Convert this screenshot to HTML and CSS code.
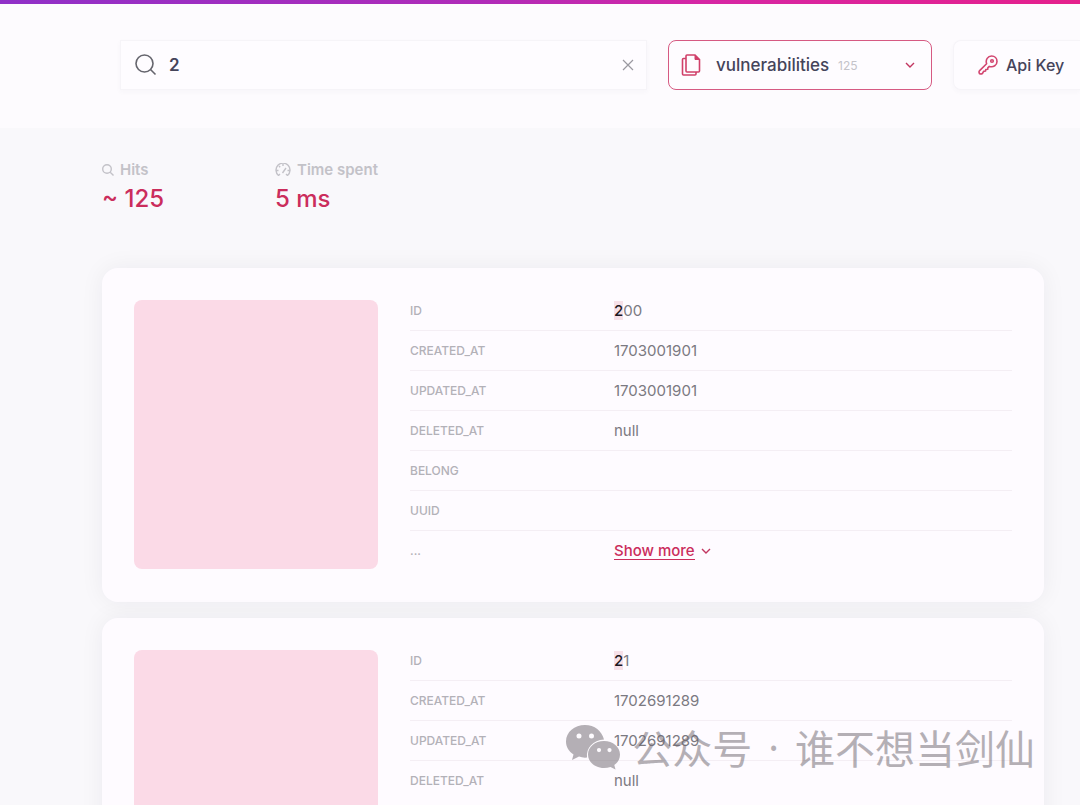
FILE: index.html
```html
<!DOCTYPE html>
<html lang="en">
<head>
<meta charset="utf-8">
<title>vulnerabilities</title>
<link rel="stylesheet" href="styles.css">
</head>
<body>
<header class="topbar">
  <label class="search">
    <svg class="icon-search" viewBox="0 0 22 22" aria-hidden="true"><circle cx="9.500" cy="9.500" r="8.500"/><path d="M15.500 15.500 20.500 20.500"/></svg>
    <input class="search-input" type="text" value="2" aria-label="Search">
    <button class="clear" type="button" aria-label="Clear"><svg viewBox="0 0 12 12"><path d="M1 1 11 11M11 1 1 11"/></svg></button>
  </label>
  <label class="index-picker">
    <svg class="icon-docs" viewBox="0 0 20 22" aria-hidden="true"><path d="M6 1H14L18.500 5.500V17Q18.500 18 17.500 18H6Q5 18 5 17V2Q5 1 6 1Z"/><path d="M14 1V5.500H18.500Z" class="fold"/><path d="M5 4.500H2.500Q1.500 4.500 1.500 5.500V20Q1.500 21 2.500 21H14Q15 21 15 20V18"/></svg>
    <select class="index-select" aria-label="Index"><option>vulnerabilities</option></select>
    <span class="index-count">125</span>
    <svg class="icon-chevron" viewBox="0 0 10 6" aria-hidden="true"><path d="M1 1 5 5 9 1"/></svg>
  </label>
  <button class="api-key" type="button">
    <svg class="icon-key" viewBox="0 0 20 20" aria-hidden="true"><path d="M8.600 8.800C7.300 4.600 9.800 1 13.600 1C16.700 1 19 3.400 19 6.400C19 10.100 15.500 12.600 11.300 11.400L9.800 12.900V14.200L7.800 14.500L7.500 16L5.600 16.400L4.400 18.500Q2.800 19.400 1.500 18.500Q.6 17 1.400 15.900Z" stroke-linejoin="round"/><circle cx="14" cy="6" r="1.300"/></svg>
    Api Key
  </button>
</header>
<main class="content">
  <section class="stats">
    <div class="stat">
      <h2 class="stat-label"><svg class="icon-small" viewBox="0 0 12 12" aria-hidden="true"><circle cx="5" cy="5" r="4.300"/><path d="M8.200 8.200 11.500 11.500"/></svg>Hits</h2>
      <p class="stat-value">~ 125</p>
    </div>
    <div class="stat">
      <h2 class="stat-label"><svg class="icon-gauge" viewBox="0 0 16 14" aria-hidden="true"><path d="M3.500 12.500A7 7 0 1 1 12.500 12.500M3.500 12.500 5 11M12.500 12.500 11 11M1.500 7.500H3.500M4 3 5.200 4.300M8 1V3M14.500 7.500H12.500M7.500 10 11 5"/></svg>Time spent</h2>
      <p class="stat-value">5 ms</p>
    </div>
  </section>
  <section class="results">
    <article class="card">
      <div class="thumb"></div>
      <dl class="fields">
        <div class="field"><dt>ID</dt><dd><mark>2</mark>00</dd></div>
        <div class="field"><dt>CREATED_AT</dt><dd>1703001901</dd></div>
        <div class="field"><dt>UPDATED_AT</dt><dd>1703001901</dd></div>
        <div class="field"><dt>DELETED_AT</dt><dd>null</dd></div>
        <div class="field"><dt>BELONG</dt><dd></dd></div>
        <div class="field"><dt>UUID</dt><dd></dd></div>
        <div class="field"><dt>...</dt><dd><button class="more" type="button"><span class="more-text">Show more</span><svg class="icon-chevron" viewBox="0 0 10 6" aria-hidden="true"><path d="M1 1 5 5 9 1"/></svg></button></dd></div>
      </dl>
    </article>
    <article class="card">
      <div class="thumb"></div>
      <dl class="fields">
        <div class="field"><dt>ID</dt><dd><mark>2</mark>1</dd></div>
        <div class="field"><dt>CREATED_AT</dt><dd>1702691289</dd></div>
        <div class="field"><dt>UPDATED_AT</dt><dd>1702691289</dd></div>
        <div class="field"><dt>DELETED_AT</dt><dd>null</dd></div>
      </dl>
    </article>
  </section>
</main>
<div class="watermark">
  <svg class="icon-wechat" viewBox="0 0 54 46" aria-hidden="true">
    <path fill-rule="evenodd" d="M19 1C8.500 1 0 8 0 17.500C0 23 3 27.500 7.500 30.500L6 36L13 32.600Q17 34 21 33.500C20 24 27 16 38 15.500C36 7 28.500 1 19 1ZM13 9.500A2.500 2.500 0 1 1 13 14.500A2.500 2.500 0 1 1 13 9.500ZM25.500 9.500A2.500 2.500 0 1 1 25.500 14.500A2.500 2.500 0 1 1 25.500 9.500Z"/>
    <path fill-rule="evenodd" d="M38 17C29 17 22 23 22 30.500C22 38 29 44 38 44Q41.500 44 44.500 43L49.500 45.500L48.300 41C52 38.500 54 35 54 30.500C54 23 47 17 38 17ZM33 24A2.100 2.100 0 1 1 33 28.200A2.100 2.100 0 1 1 33 24ZM43.500 24A2.100 2.100 0 1 1 43.500 28.200A2.100 2.100 0 1 1 43.500 24Z"/>
  </svg>
  <span>公众号</span>
  <span class="dot">·</span>
  <span>谁不想当剑仙</span>
</div>
</body>
</html>
```
FILE: styles.css
```css
* { box-sizing: border-box; }

body {
  margin: 0;
  height: 100vh;
  overflow: hidden;
  position: relative;
  background: #f9f8fb;
  color: #45445a;
  font-family: Inter, "Liberation Sans", "Noto Sans CJK SC", sans-serif;
  font-size: 15px;
}

button, input, select {
  font: inherit;
  color: inherit;
  background: none;
  border: 0;
  padding: 0;
  margin: 0;
}

svg {
  display: block;
  flex: none;
  fill: none;
  stroke: currentColor;
  stroke-width: 1.4;
}

.topbar {
  display: flex;
  gap: 21px;
  padding: 40px 0 38px 120px;
  background: linear-gradient(90deg, #9030c8, #b02bb8 45%, #d626a4 65%, #e5208c) top / 100% 4px no-repeat #fdfbfe;
}

.search, .index-picker, .api-key {
  display: flex;
  align-items: center;
  height: 50px;
  font-size: 17px;
  font-weight: 500;
  background: #fefcff;
}

.search {
  flex: 1;
  min-width: 0;
  padding: 0 12px 0 14px;
  border: 1px solid #f6f4f8;
  box-shadow: 0 2px 5px rgba(60, 50, 80, 0.03);
}

.icon-search {
  width: 22px;
  height: 22px;
  color: #65656d;
  stroke-width: 1.6;
}

.search-input {
  flex: 1;
  min-width: 0;
  margin-left: 12px;
  font-weight: 600;
  outline: 0;
}

.clear { color: #9a99a0; }
.clear svg { width: 12px; height: 12px; stroke-width: 1.2; }

.index-picker {
  width: 264px;
  padding: 0 16px 0 12px;
  border: 1px solid #d65a82;
  border-radius: 8px;
}

.icon-docs { width: 20px; height: 22px; color: #d0406a; stroke-width: 1.6; }
.fold { fill: #d0406a; stroke-width: 1; }

.index-select {
  appearance: none;
  margin-left: 15px;
}

.index-count {
  margin-left: 8px;
  font-size: 12px;
  font-weight: 400;
  color: #c4c3c9;
}

.icon-chevron { width: 10px; height: 6px; color: #c23660; }
.index-picker .icon-chevron { margin-left: auto; }

.api-key {
  gap: 8px;
  width: 127px;
  padding-left: 24px;
  border: 1px solid #f6f4f8;
  border-right: 0;
  border-radius: 8px 0 0 8px;
  box-shadow: 0 2px 5px rgba(60, 50, 80, 0.03);
  font-size: 16px;
  white-space: nowrap;
}

.icon-key { width: 20px; height: 20px; color: #d24670; stroke-width: 1.6; }

.content { padding: 32px 36px 0 102px; }

.stats { display: flex; }
.stat { width: 173px; }

.stat-label {
  display: flex;
  align-items: center;
  gap: 6px;
  margin: 0;
  font-size: 15px;
  line-height: 20px;
  font-weight: 600;
  color: #c3c2c8;
}

.icon-small { width: 12px; height: 12px; }
.icon-gauge { width: 16px; height: 14px; stroke-width: 1.4; }

.stat-value {
  margin: 3px 0 0;
  font-size: 24px;
  line-height: 32px;
  font-weight: 500;
  color: #cb2d5c;
}

.results {
  display: grid;
  gap: 16px;
  margin-top: 53px;
}

.card {
  display: flex;
  align-items: flex-start;
  gap: 32px;
  min-height: 334px;
  padding: 23px 32px 31px;
  background: #fefbff;
  border-radius: 16px;
  box-shadow: 0 0 24px rgba(40, 30, 50, 0.06);
}

.thumb {
  flex: none;
  width: 244px;
  height: 269px;
  margin-top: 9px;
  border-radius: 8px;
  background: #fbdae7;
}

.fields { flex: 1; margin: 0; }

.field {
  display: flex;
  align-items: center;
  height: 40px;
  border-bottom: 1px solid #f4eef4;
}

.field:last-child { border-bottom-color: transparent; }

dt {
  width: 204px;
  font-size: 12px;
  font-weight: 500;
  color: #b3b1b8;
}

dd { margin: 0; color: #7b7981; }

mark {
  background: #f6e0e8;
  color: #1d1722;
  font-weight: 500;
}

.more {
  display: flex;
  align-items: center;
  gap: 6px;
  font-size: 15px;
  font-weight: 500;
  line-height: 17px;
  color: #cb2d5c;
}

.more-text { border-bottom: 1px solid #cb2d5c; }

.watermark {
  position: absolute;
  right: 45px;
  bottom: 29px;
  display: flex;
  align-items: center;
  gap: 12px;
  font-family: "Noto Sans CJK SC", sans-serif;
  font-size: 40px;
  line-height: 58px;
  color: #6c666d;
  opacity: 0.5;
  white-space: nowrap;
  pointer-events: none;
}

.dot { font-family: "Noto Sans", sans-serif; margin: 0 4px; }

.icon-wechat {
  width: 54px;
  height: 46px;
  fill: currentColor;
  stroke: none;
}
```
